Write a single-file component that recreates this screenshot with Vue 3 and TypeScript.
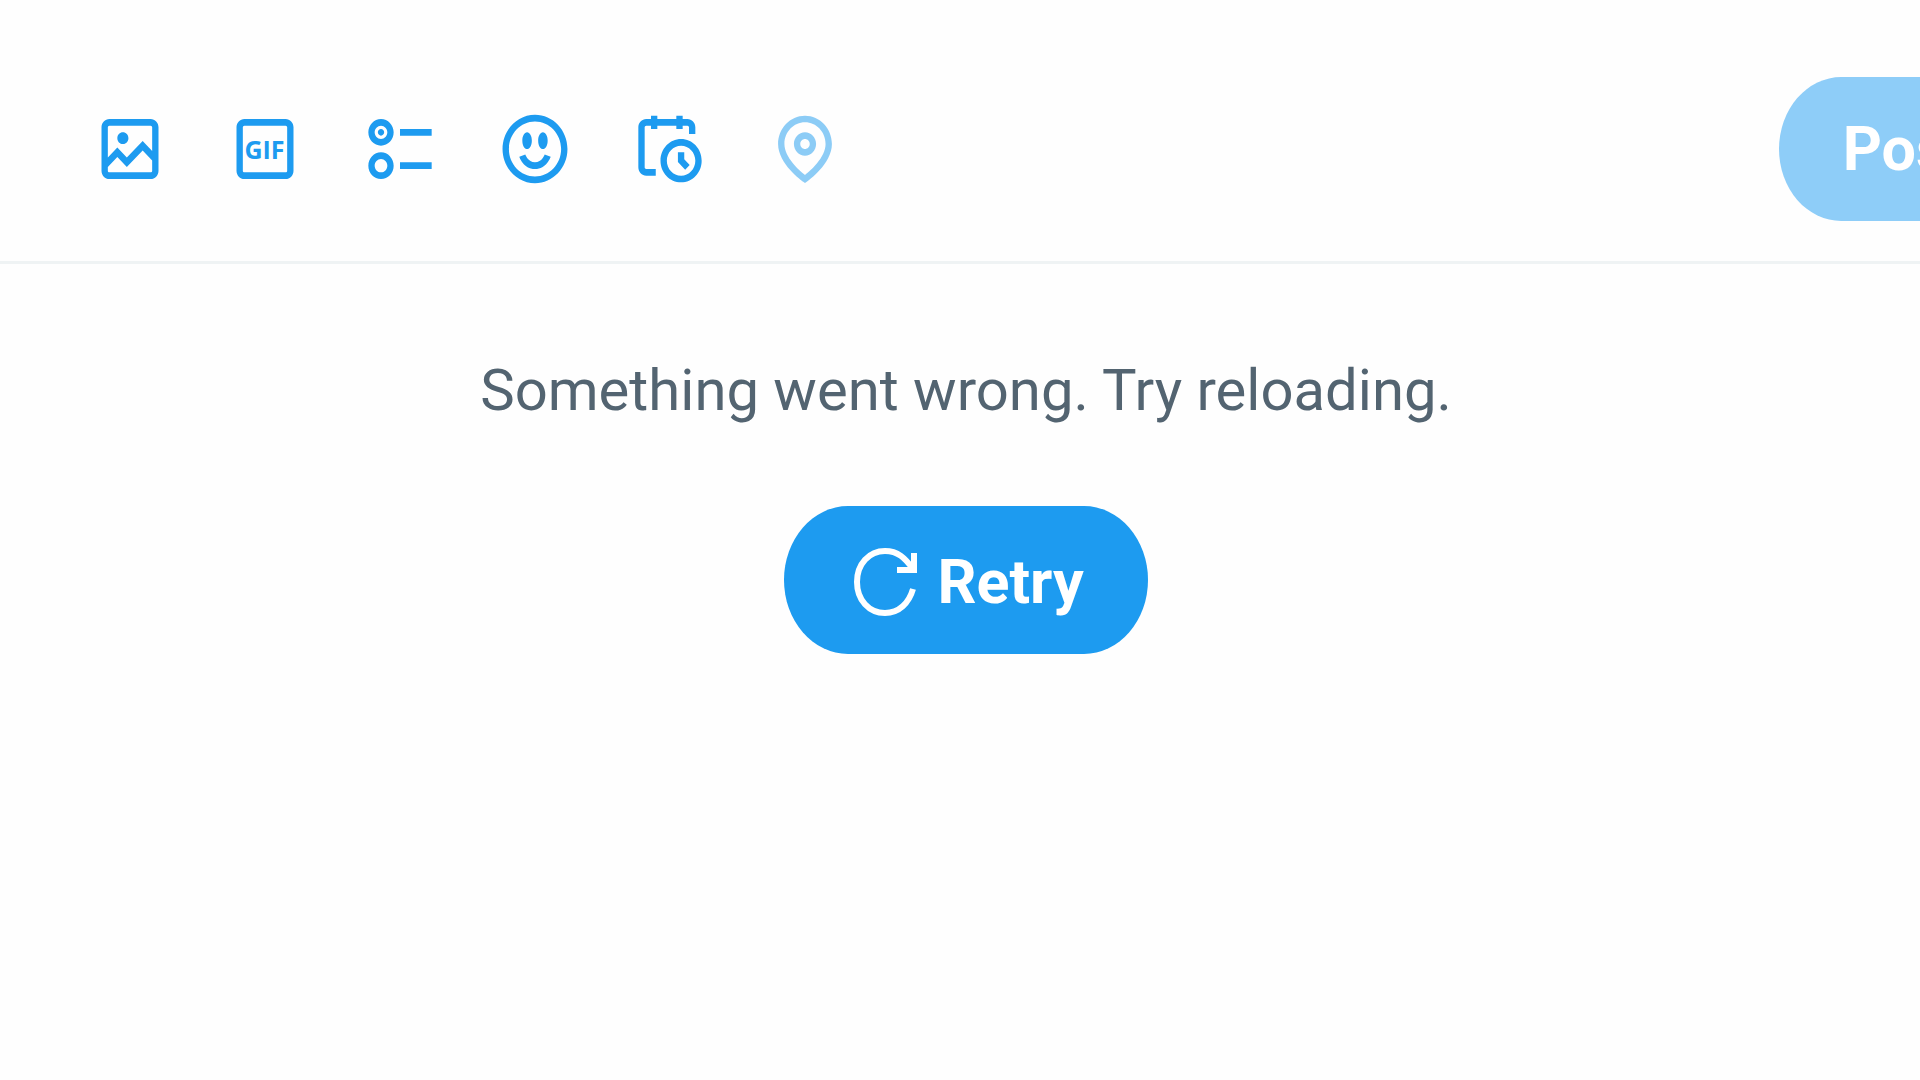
<script setup lang="ts">
interface Tool {
  label: string
  path: string
  text?: string
  disabled?: boolean
}

const tools: Tool[] = [
  {
    label: 'Add photos or video',
    path: 'M3 5.5C3 4.119 4.119 3 5.5 3h13C19.881 3 21 4.119 21 5.5v13c0 1.381-1.119 2.5-2.5 2.5h-13C4.119 21 3 19.881 3 18.5v-13zM5.5 5c-.276 0-.5.224-.5.5v9.086l3-3 3 3 5-5 3 3V5.5c0-.276-.224-.5-.5-.5h-13zM19 15.414l-3-3-5 5-3-3-3 3V18.5c0 .276.224.5.5.5h13c.276 0 .5-.224.5-.5v-3.086zM9.75 7C8.784 7 8 7.784 8 8.75s.784 1.75 1.75 1.75 1.75-.784 1.75-1.75S10.716 7 9.75 7z',
  },
  {
    label: 'Add a GIF',
    text: 'GIF',
    path: 'M3 5.5C3 4.119 4.12 3 5.5 3h13C19.88 3 21 4.119 21 5.5v13c0 1.381-1.12 2.5-2.5 2.5h-13C4.12 21 3 19.881 3 18.5v-13zM5.5 5c-.28 0-.5.224-.5.5v13c0 .276.22.5.5.5h13c.28 0 .5-.224.5-.5v-13c0-.276-.22-.5-.5-.5h-13z',
  },
  {
    label: 'Add poll',
    path: 'M6 5c-1.1 0-2 .895-2 2s.9 2 2 2 2-.895 2-2-.9-2-2-2zM2 7c0-2.209 1.79-4 4-4s4 1.791 4 4-1.79 4-4 4-4-1.791-4-4zm20 1H12V6h10v2zM6 15c-1.1 0-2 .895-2 2s.9 2 2 2 2-.895 2-2-.9-2-2-2zm-4 2c0-2.209 1.79-4 4-4s4 1.791 4 4-1.79 4-4 4-4-1.791-4-4zm20 1H12v-2h10v2zM7 7c0 .552-.45 1-1 1s-1-.448-1-1 .45-1 1-1 1 .448 1 1z',
  },
  {
    label: 'Add emoji',
    path: 'M8 9.5C8 8.119 8.672 7 9.5 7S11 8.119 11 9.5 10.328 12 9.5 12 8 10.881 8 9.5zm6.5 2.5c.828 0 1.5-1.119 1.5-2.5S15.328 7 14.5 7 13 8.119 13 9.5s.672 2.5 1.5 2.5zM12 16c-2.224 0-3.021-2.227-3.051-2.316l-1.897.633c.05.15 1.271 3.684 4.949 3.684s4.898-3.533 4.949-3.684l-1.896-.638c-.033.095-.83 2.322-3.053 2.322zm10.25-4.001c0 5.652-4.598 10.25-10.25 10.25S1.75 17.652 1.75 12 6.348 1.75 12 1.75 22.25 6.348 22.25 12zm-2 0c0-4.549-3.701-8.25-8.25-8.25S3.75 7.451 3.75 12s3.701 8.25 8.25 8.25 8.25-3.701 8.25-8.25z',
  },
  {
    label: 'Schedule post',
    path: 'M6 3V2h2v1h6V2h2v1h1.5C18.88 3 20 4.119 20 5.5v2h-2v-2c0-.276-.22-.5-.5-.5H16v1h-2V5H8v1H6V5H4.5c-.28 0-.5.224-.5.5v12c0 .276.22.5.5.5h3v2h-3C3.12 20 2 18.881 2 17.5v-12C2 4.119 3.12 3 4.5 3H6zm9.5 8c-2.49 0-4.5 2.015-4.5 4.5s2.01 4.5 4.5 4.5 4.5-2.015 4.5-4.5-2.01-4.5-4.5-4.5zM9 15.5C9 11.91 11.91 9 15.5 9s6.5 2.91 6.5 6.5-2.91 6.5-6.5 6.5S9 19.09 9 15.5zm5.5-2.5h2v2.086l1.71 1.707-1.42 1.414-2.29-2.293V13z',
  },
  {
    label: 'Tag location',
    disabled: true,
    path: 'M12 7c-1.93 0-3.5 1.57-3.5 3.5S10.07 14 12 14s3.5-1.57 3.5-3.5S13.93 7 12 7zm0 5c-.827 0-1.5-.673-1.5-1.5S11.173 9 12 9s1.5.673 1.5 1.5S12.827 12 12 12zm0-10c-4.687 0-8.5 3.813-8.5 8.5 0 5.967 7.621 11.116 7.945 11.332l.555.37.555-.37c.324-.216 7.945-5.365 7.945-11.332C20.5 5.813 16.687 2 12 2zm0 17.77c-1.665-1.241-6.5-5.196-6.5-9.27C5.5 6.916 8.416 4 12 4s6.5 2.916 6.5 6.5c0 4.073-4.835 8.028-6.5 9.27z',
  },
]
</script>

<template>
  <div class="page">
    <header class="composer">
      <div class="tools" role="toolbar" aria-label="Post options">
        <button
          v-for="tool in tools"
          :key="tool.label"
          type="button"
          class="tool"
          :aria-label="tool.label"
          :disabled="tool.disabled"
        >
          <svg class="tool-icon" viewBox="0 0 24 24" preserveAspectRatio="none" aria-hidden="true">
            <path :d="tool.path" />
          </svg>
          <span v-if="tool.text" class="tool-text">{{ tool.text }}</span>
        </button>
      </div>
      <button type="button" class="pill post" disabled>Post</button>
    </header>

    <main class="error">
      <p class="message">Something went wrong. Try reloading.</p>
      <button type="button" class="pill retry">
        <svg class="retry-icon" viewBox="0 0 66 70" aria-hidden="true">
          <path d="M60 42C56 56 46 66 32 66C16 66 4 53 4 35S16 4 32 4C45 4 52 11 60 22" />
          <path d="M61 6V23H44" />
        </svg>
        <span>Retry</span>
      </button>
    </main>
  </div>
</template>

<style>
body {
  margin: 0;
  background: #fefefe;
}
</style>

<style scoped>
.page {
  min-height: 100vh;
  overflow: hidden;
  font-family: Roboto, "Liberation Sans", sans-serif;
  font-size: 61px;
  line-height: 72px;
}

.composer {
  display: flex;
  align-items: center;
  justify-content: space-between;
  padding: 77px 0 40px 62px;
  border-bottom: 3px solid #eff3f4;
}

.tools {
  display: flex;
}

.tool {
  position: relative;
  display: flex;
  align-items: center;
  justify-content: center;
  width: 135px;
  height: 135px;
  padding: 0;
  border: 0;
  background: none;
  color: #1d9bf0;
}

.tool:disabled {
  opacity: 0.5;
}

.tool-icon {
  width: 76px;
  height: 80px;
  fill: currentColor;
}

.tool-text {
  position: absolute;
  inset: 0;
  display: grid;
  place-items: center;
  font: 700 25px/28px "Open Sans", sans-serif;
}

.pill {
  flex: none;
  display: flex;
  align-items: center;
  border: 0;
  border-radius: 64px / 74px;
  color: #fff;
  font: inherit;
  font-weight: 700;
}

.post {
  height: 144px;
  margin-right: -112px;
  padding: 0 64px;
  background: #8ecdf8;
}

.error {
  display: flex;
  flex-direction: column;
  align-items: center;
  padding: 90px 0 0 12px;
}

.message {
  margin: 0 0 80px;
  color: #536471;
  font-size: 58px;
}

.retry {
  gap: 18px;
  height: 148px;
  padding: 4px 64px 0 69px;
  background: #1d9bf0;
}

.retry-icon {
  width: 66px;
  height: 70px;
  fill: none;
  stroke: currentColor;
  stroke-width: 6;
}
</style>
